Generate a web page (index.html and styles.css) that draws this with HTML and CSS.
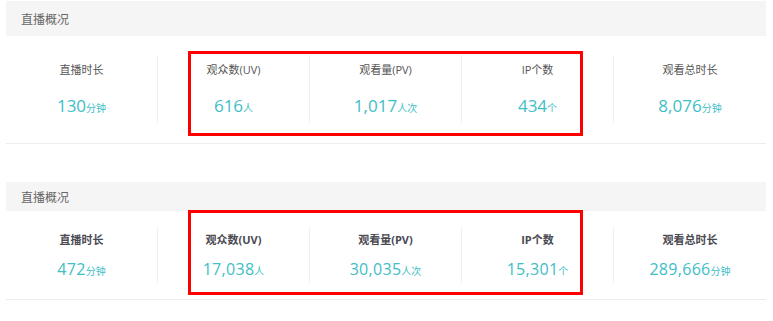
FILE: index.html
```html
<!DOCTYPE html>
<html lang="zh">
<head>
<meta charset="utf-8">
<link rel="stylesheet" href="styles.css">
</head>
<body>
<section class="panel panel-a">
  <div class="panel-head">直播概况</div>
  <div class="panel-body">
    <div class="stat"><div class="label">直播时长</div><div class="value">130<span class="unit">分钟</span></div></div>
    <div class="stat"><div class="label">观众数(UV)</div><div class="value">616<span class="unit">人</span></div></div>
    <div class="stat"><div class="label">观看量(PV)</div><div class="value">1,017<span class="unit">人次</span></div></div>
    <div class="stat"><div class="label">IP个数</div><div class="value">434<span class="unit">个</span></div></div>
    <div class="stat"><div class="label">观看总时长</div><div class="value">8,076<span class="unit">分钟</span></div></div>
  </div>
  <div class="highlight"></div>
</section>
<section class="panel panel-b">
  <div class="panel-head">直播概况</div>
  <div class="panel-body">
    <div class="stat"><div class="label">直播时长</div><div class="value">472<span class="unit">分钟</span></div></div>
    <div class="stat"><div class="label">观众数(UV)</div><div class="value">17,038<span class="unit">人</span></div></div>
    <div class="stat"><div class="label">观看量(PV)</div><div class="value">30,035<span class="unit">人次</span></div></div>
    <div class="stat"><div class="label">IP个数</div><div class="value">15,301<span class="unit">个</span></div></div>
    <div class="stat"><div class="label">观看总时长</div><div class="value">289,666<span class="unit">分钟</span></div></div>
  </div>
  <div class="highlight"></div>
</section>
</body>
</html>
```
FILE: styles.css
```css
* { box-sizing: border-box; }
body {
  margin: 0;
  background: #fff;
  font-family: "Open Sans", "Noto Sans CJK SC", sans-serif;
}
.panel {
  position: relative;
  width: 760px;
  margin-left: 6px;
  background: #fff;
  border-bottom: 1px solid #ededed;
}
.panel-a { margin-top: 1px; }
.panel-b { margin-top: 38px; }
.panel-head {
  background: #f5f5f5;
  color: #666;
  font-size: 12px;
  padding-left: 15px;
  font-family: "Noto Sans CJK SC", sans-serif;
}
.panel-a .panel-head { height: 35px; line-height: 35px; }
.panel-b .panel-head { height: 29px; line-height: 29px; }
.panel-body {
  display: grid;
  grid-template-columns: repeat(5, 1fr);
}
.panel-a .panel-body { padding: 19px 0 20px; }
.panel-b .panel-body { padding: 16px 0 16px; }
.stat {
  display: flex;
  flex-direction: column;
  align-items: center;
  border-right: 1px solid #f0f0f0;
}
.stat:last-child { border-right: none; }
.panel-a .stat { height: 68px; padding-top: 7px; }
.panel-b .stat { height: 56px; padding-top: 5px; }
.label {
  font-size: 11px;
  line-height: 16px;
  color: #555;
}
.panel-b .label { font-weight: bold; color: #4a4a52; }
.value {
  line-height: 24px;
  color: #40bec6;
  white-space: nowrap;
}
.panel-a .value { font-size: 17px; margin-top: 16px; }
.panel-b .value { font-size: 16px; margin-top: 9px; letter-spacing: 0.3px; }
.unit {
  font-size: 10px;
  letter-spacing: 0;
  font-family: "Noto Sans CJK SC", sans-serif;
}
.highlight {
  position: absolute;
  left: 182px;
  width: 395px;
  height: 85px;
  border: 3px solid #ff0000;
}
.panel-a .highlight { top: 50px; }
.panel-b .highlight { top: 28px; }
```
